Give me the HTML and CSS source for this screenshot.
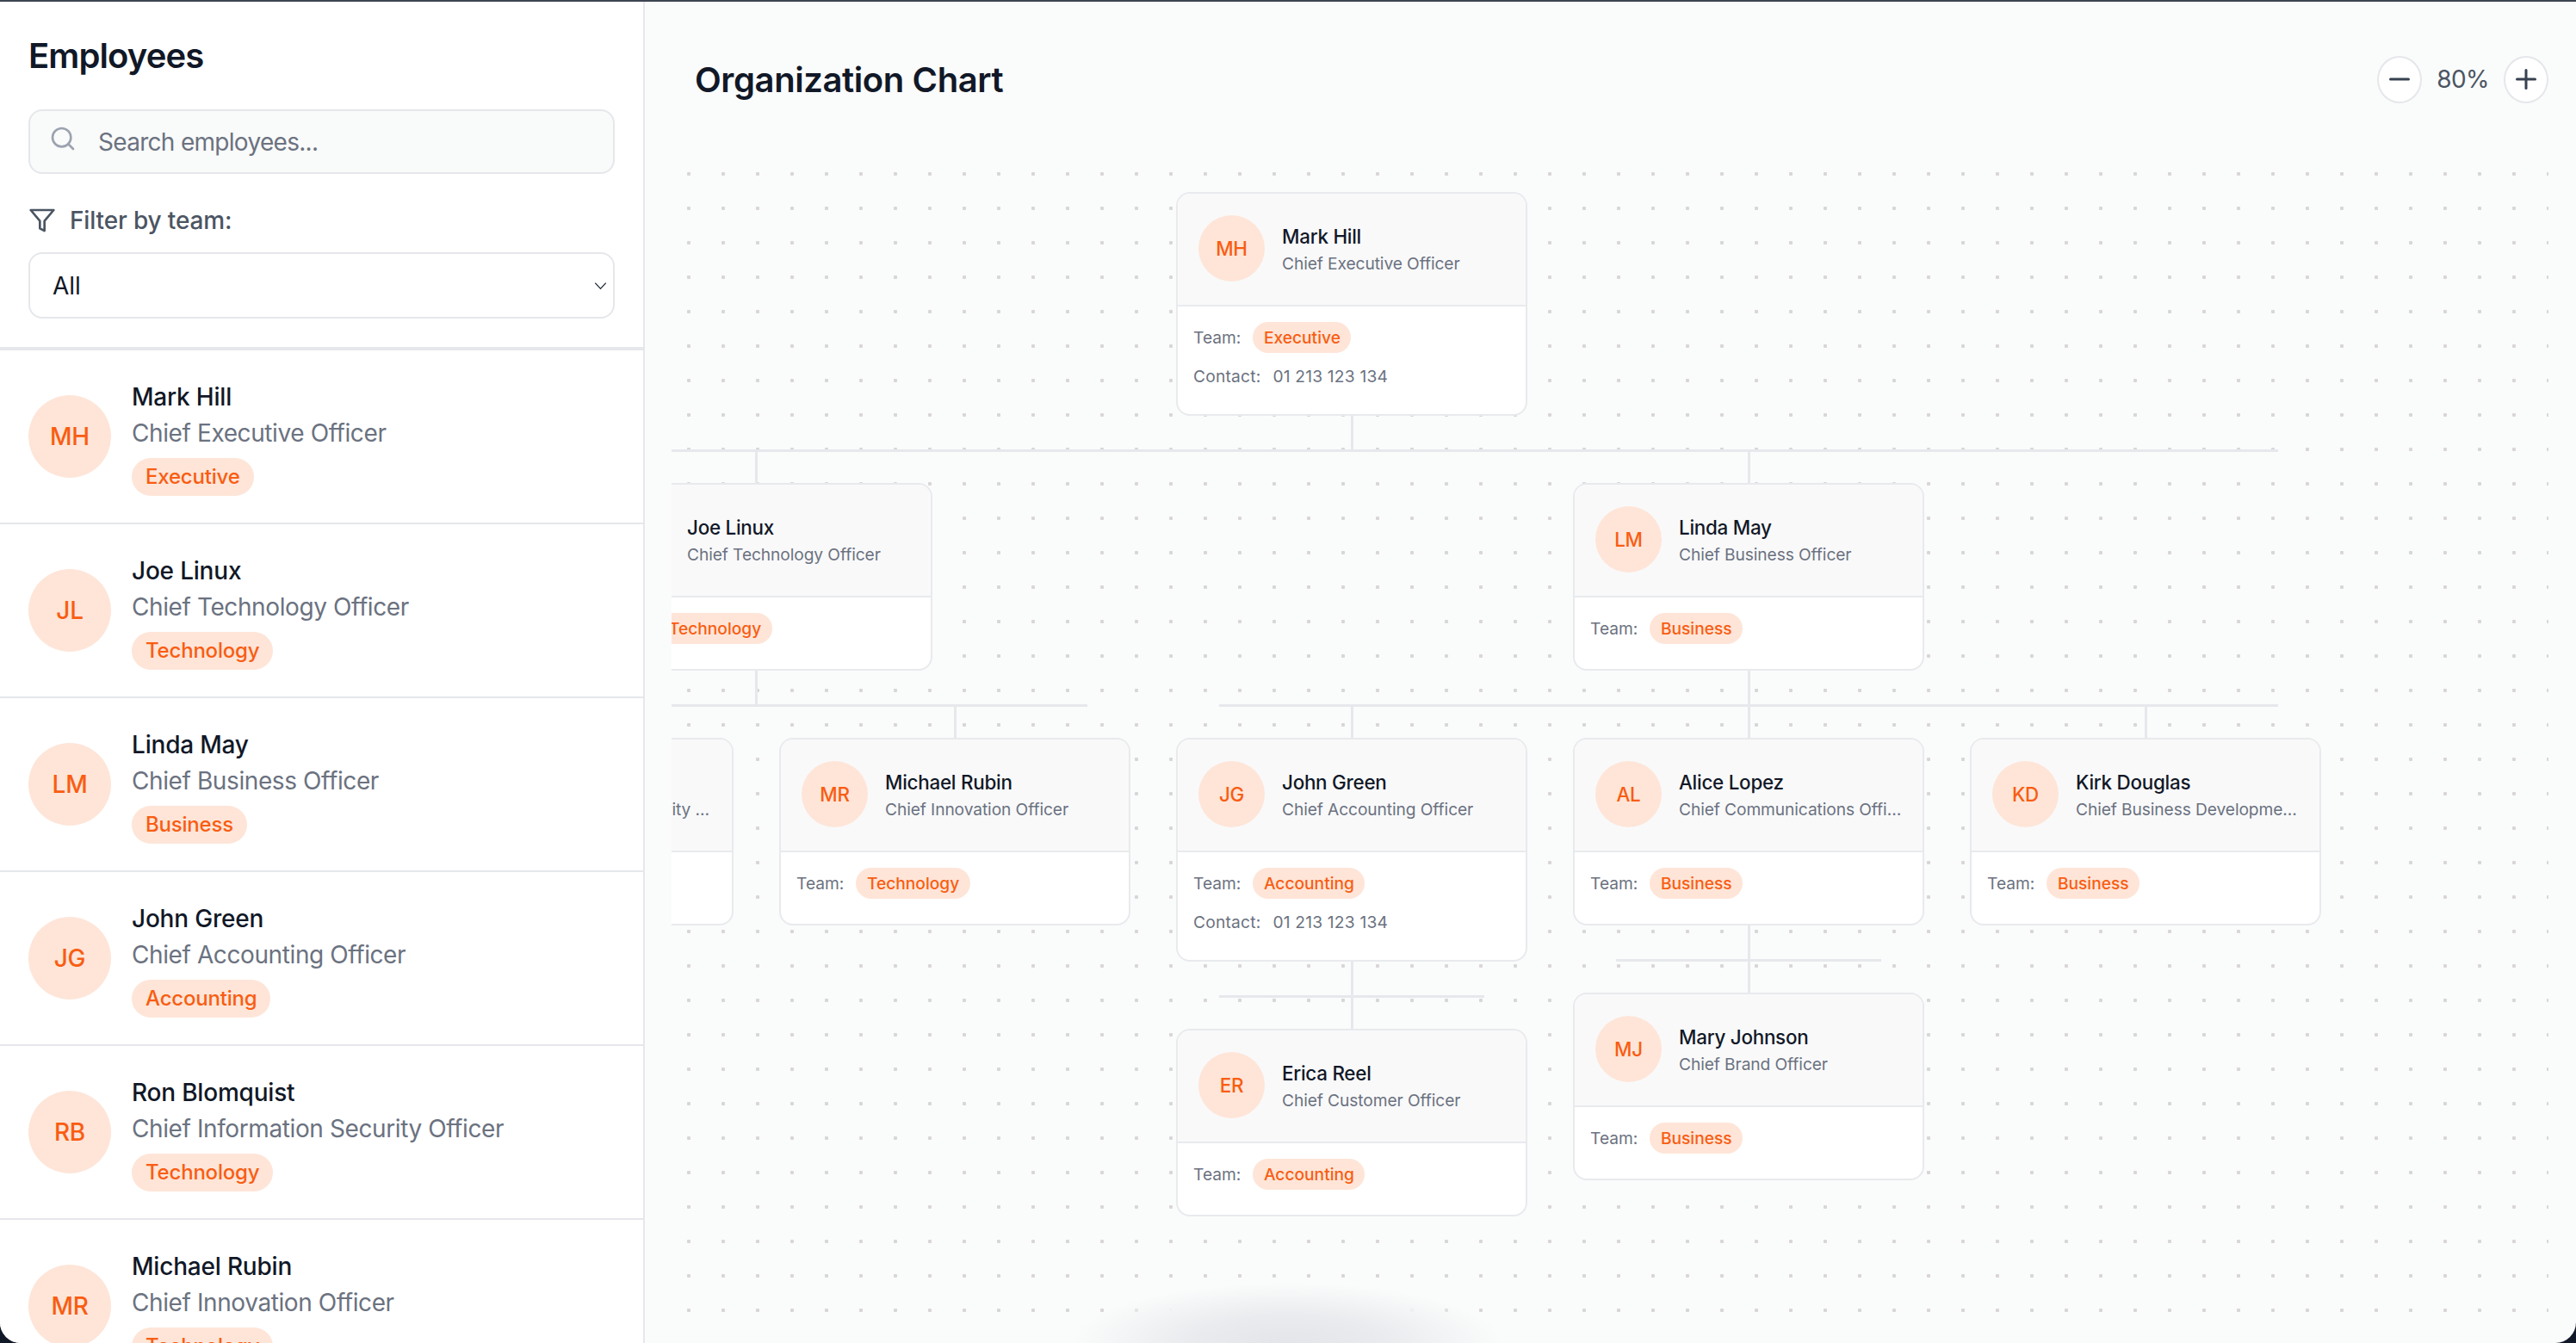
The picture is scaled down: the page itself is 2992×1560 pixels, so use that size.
FILE: index.html
```html
<!DOCTYPE html>
<html lang="en">
<head>
    <meta charset="UTF-8">
    <meta name="viewport" content="width=device-width, initial-scale=1.0">
    <title>Organization Chart</title>
    <link rel="stylesheet" href="styles.css">
</head>
<body>
<div class="app">
    <aside class="sidebar">
        <div class="sidebar-head">
            <h2 class="sidebar-title">Employees</h2>
            <div class="search">
                <svg class="search-icon" viewBox="0 0 24 24" fill="none" stroke="currentColor" stroke-width="2" stroke-linecap="round" stroke-linejoin="round"><circle cx="11" cy="11" r="8"/><path d="m21 21-4.3-4.3"/></svg>
                <input class="search-input" type="text" placeholder="Search employees...">
            </div>
            <div class="filter-label">
                <svg class="filter-icon" viewBox="0 0 24 24" fill="none" stroke="currentColor" stroke-width="2" stroke-linecap="round" stroke-linejoin="round"><polygon points="22 3 2 3 10 12.46 10 19 14 21 14 12.46 22 3"/></svg>
                <span>Filter by team:</span>
            </div>
            <div class="select-wrap">
                <select class="team-select"><option>All</option></select>
                <svg class="select-arrow" viewBox="0 0 18 12" fill="none" stroke="currentColor" stroke-width="1.6"><path d="M1.5 2 9 10l7.5-8"/></svg>
            </div>
        </div>
        <div class="employee-list">
            <div class="employee">
                <div class="avatar">MH</div>
                <div class="employee-text">
                    <div class="employee-name">Mark Hill</div>
                    <div class="employee-role">Chief Executive Officer</div>
                    <span class="tag">Executive</span>
                </div>
            </div>
            <div class="employee">
                <div class="avatar">JL</div>
                <div class="employee-text">
                    <div class="employee-name">Joe Linux</div>
                    <div class="employee-role">Chief Technology Officer</div>
                    <span class="tag">Technology</span>
                </div>
            </div>
            <div class="employee">
                <div class="avatar">LM</div>
                <div class="employee-text">
                    <div class="employee-name">Linda May</div>
                    <div class="employee-role">Chief Business Officer</div>
                    <span class="tag">Business</span>
                </div>
            </div>
            <div class="employee">
                <div class="avatar">JG</div>
                <div class="employee-text">
                    <div class="employee-name">John Green</div>
                    <div class="employee-role">Chief Accounting Officer</div>
                    <span class="tag">Accounting</span>
                </div>
            </div>
            <div class="employee">
                <div class="avatar">RB</div>
                <div class="employee-text">
                    <div class="employee-name">Ron Blomquist</div>
                    <div class="employee-role">Chief Information Security Officer</div>
                    <span class="tag">Technology</span>
                </div>
            </div>
            <div class="employee">
                <div class="avatar">MR</div>
                <div class="employee-text">
                    <div class="employee-name">Michael Rubin</div>
                    <div class="employee-role">Chief Innovation Officer</div>
                    <span class="tag">Technology</span>
                </div>
            </div>
        </div>
    </aside>

    <main class="chart">
        <div class="chart-head">
            <h1 class="chart-title">Organization Chart</h1>
            <div class="zoom">
                <button class="zoom-btn"><svg viewBox="0 0 24 24" fill="none" stroke="currentColor" stroke-width="2" stroke-linecap="round"><path d="M5 12h14"/></svg></button>
                <span class="zoom-value">80%</span>
                <button class="zoom-btn"><svg viewBox="0 0 24 24" fill="none" stroke="currentColor" stroke-width="2" stroke-linecap="round"><path d="M5 12h14"/><path d="M12 5v14"/></svg></button>
            </div>
        </div>
        <div class="canvas">
            <svg class="links" width="2180" height="1378">
                <!-- level 1 -->
                <path d="M790.5 301v40M-285 341.5H1866M98.5 341v38M1251.5 341v38"/>
                <!-- joe -> ron, michael -->
                <path d="M98.5 597v41M-285 637.5H483M329.5 638v37"/>
                <!-- linda -> john, alice, kirk -->
                <path d="M1251.5 597v78M636 637.5H1866M790.5 638v37M1712.5 638v37"/>
                <!-- john -> erica -->
                <path d="M790.5 935v78M636 975.5H944"/>
                <!-- alice -> mary -->
                <path d="M1251.5 893v78M1097 933.5H1405"/>
            </svg>

            <div class="card pos-mark">
                <div class="card-head">
                    <div class="card-avatar">MH</div>
                    <div class="card-text">
                        <div class="card-name">Mark Hill</div>
                        <div class="card-role">Chief Executive Officer</div>
                    </div>
                </div>
                <div class="card-body">
                    <div class="card-row"><span>Team:</span><span class="card-tag">Executive</span></div>
                    <div class="card-row card-contact"><span>Contact:</span><span>01 213 123 134</span></div>
                </div>
            </div>

            <div class="card pos-joe">
                <div class="card-head">
                    <div class="card-avatar">JL</div>
                    <div class="card-text">
                        <div class="card-name">Joe Linux</div>
                        <div class="card-role">Chief Technology Officer</div>
                    </div>
                </div>
                <div class="card-body">
                    <div class="card-row"><span>Team:</span><span class="card-tag">Technology</span></div>
                </div>
            </div>

            <div class="card pos-linda">
                <div class="card-head">
                    <div class="card-avatar">LM</div>
                    <div class="card-text">
                        <div class="card-name">Linda May</div>
                        <div class="card-role">Chief Business Officer</div>
                    </div>
                </div>
                <div class="card-body">
                    <div class="card-row"><span>Team:</span><span class="card-tag">Business</span></div>
                </div>
            </div>

            <div class="card pos-ron">
                <div class="card-head">
                    <div class="card-avatar">RB</div>
                    <div class="card-text">
                        <div class="card-name">Ron Blomquist</div>
                        <div class="card-role">Chief Information Security Officer</div>
                    </div>
                </div>
                <div class="card-body">
                    <div class="card-row"><span>Team:</span><span class="card-tag">Technology</span></div>
                </div>
            </div>

            <div class="card pos-michael">
                <div class="card-head">
                    <div class="card-avatar">MR</div>
                    <div class="card-text">
                        <div class="card-name">Michael Rubin</div>
                        <div class="card-role">Chief Innovation Officer</div>
                    </div>
                </div>
                <div class="card-body">
                    <div class="card-row"><span>Team:</span><span class="card-tag">Technology</span></div>
                </div>
            </div>

            <div class="card pos-john">
                <div class="card-head">
                    <div class="card-avatar">JG</div>
                    <div class="card-text">
                        <div class="card-name">John Green</div>
                        <div class="card-role">Chief Accounting Officer</div>
                    </div>
                </div>
                <div class="card-body">
                    <div class="card-row"><span>Team:</span><span class="card-tag">Accounting</span></div>
                    <div class="card-row card-contact"><span>Contact:</span><span>01 213 123 134</span></div>
                </div>
            </div>

            <div class="card pos-alice">
                <div class="card-head">
                    <div class="card-avatar">AL</div>
                    <div class="card-text">
                        <div class="card-name">Alice Lopez</div>
                        <div class="card-role">Chief Communications Officer</div>
                    </div>
                </div>
                <div class="card-body">
                    <div class="card-row"><span>Team:</span><span class="card-tag">Business</span></div>
                </div>
            </div>

            <div class="card pos-kirk">
                <div class="card-head">
                    <div class="card-avatar">KD</div>
                    <div class="card-text">
                        <div class="card-name">Kirk Douglas</div>
                        <div class="card-role">Chief Business Development Officer</div>
                    </div>
                </div>
                <div class="card-body">
                    <div class="card-row"><span>Team:</span><span class="card-tag">Business</span></div>
                </div>
            </div>

            <div class="card pos-erica">
                <div class="card-head">
                    <div class="card-avatar">ER</div>
                    <div class="card-text">
                        <div class="card-name">Erica Reel</div>
                        <div class="card-role">Chief Customer Officer</div>
                    </div>
                </div>
                <div class="card-body">
                    <div class="card-row"><span>Team:</span><span class="card-tag">Accounting</span></div>
                </div>
            </div>

            <div class="card pos-mary">
                <div class="card-head">
                    <div class="card-avatar">MJ</div>
                    <div class="card-text">
                        <div class="card-name">Mary Johnson</div>
                        <div class="card-role">Chief Brand Officer</div>
                    </div>
                </div>
                <div class="card-body">
                    <div class="card-row"><span>Team:</span><span class="card-tag">Business</span></div>
                </div>
            </div>
        </div>
    </main>
    <div class="dock-shadow"></div>
</div>
</body>
</html>
```

FILE: styles.css
```css
* {
    box-sizing: border-box;
}

body {
    margin: 0;
    height: 1560px;
    overflow: hidden;
    background-color: #111827;
    font-family: Inter, "Liberation Sans", sans-serif;
}

.app {
    position: relative;
    display: flex;
    height: 1560px;
    overflow: hidden;
    background-color: #fafbfb;
    border-top: 2px solid #3d4451;
    border-radius: 0 0 24px 24px;
}

/* sidebar */
.sidebar {
    flex: 0 0 749px;
    display: flex;
    flex-direction: column;
    overflow: hidden;
    background-color: #fff;
    border-right: 2px solid #e5e7eb;
}

.sidebar-head {
    padding: 41px 33px 33px;
    border-bottom: 4px solid #e5e7eb;
}

.sidebar-title {
    margin: 0 0 40px;
    font-size: 40px;
    line-height: 44px;
    font-weight: 600;
    letter-spacing: -0.9px;
    color: #111827;
}

.search {
    position: relative;
    margin-bottom: 33px;
}

.search-icon {
    position: absolute;
    left: 24px;
    top: 18px;
    width: 32px;
    height: 32px;
    color: #9ca3af;
}

.search-input {
    display: block;
    width: 100%;
    height: 75px;
    padding: 0 24px 0 79px;
    font-family: inherit;
    font-size: 28px;
    letter-spacing: -0.7px;
    color: #111827;
    background-color: #f9fafa;
    border: 2px solid #e5e7eb;
    border-radius: 16px;
    outline: none;
}

.search-input::placeholder {
    color: #6b7280;
    opacity: 1;
}

.filter-label {
    display: flex;
    align-items: center;
    gap: 16px;
    margin-bottom: 16px;
    font-size: 28px;
    line-height: 42px;
    font-weight: 500;
    letter-spacing: -0.15px;
    color: #4b5563;
}

.filter-icon {
    width: 32px;
    height: 32px;
}

.select-wrap {
    position: relative;
}

.team-select {
    display: block;
    width: 100%;
    height: 77px;
    padding: 0 26px;
    font-family: inherit;
    font-size: 28px;
    color: #111827;
    background-color: #fff;
    border: 2px solid #e5e7eb;
    border-radius: 16px;
    appearance: none;
    outline: none;
}

.select-arrow {
    position: absolute;
    right: 8px;
    top: 34px;
    width: 17px;
    height: 10px;
    color: #1f2937;
}

.employee {
    display: flex;
    align-items: center;
    gap: 24px;
    padding: 32px 33px;
    border-bottom: 2px solid #e5e7eb;
}

.employee-text {
    margin: 1px 0 -1px;
}

.avatar {
    flex: none;
    display: flex;
    align-items: center;
    justify-content: center;
    width: 96px;
    height: 96px;
    font-size: 28px;
    font-weight: 500;
    letter-spacing: -0.3px;
    color: #f95d12;
    background-color: #fee5d8;
    border-radius: 50%;
}

.employee-name {
    font-size: 28px;
    line-height: 42px;
    font-weight: 500;
    letter-spacing: -0.2px;
    color: #111827;
}

.employee-role {
    font-size: 28px;
    line-height: 42px;
    letter-spacing: -0.4px;
    color: #6b7280;
}

.tag {
    display: inline-block;
    margin-top: 8px;
    padding: 0 16px;
    font-size: 24px;
    line-height: 44px;
    font-weight: 500;
    letter-spacing: -0.2px;
    color: #f95d12;
    background-color: #fee5d8;
    border-radius: 22px;
}

/* chart side */
.chart {
    flex: 1;
    display: flex;
    flex-direction: column;
    padding: 0 32px 0 31px;
}

.chart-head {
    flex: 0 0 180px;
    display: flex;
    align-items: center;
    justify-content: space-between;
    padding: 0 0 0 27px;
}

.chart-title {
    margin: 0;
    font-size: 40px;
    font-weight: 600;
    letter-spacing: -0.4px;
    color: #111827;
}

.zoom {
    display: flex;
    align-items: center;
    gap: 17px;
}

.zoom-btn {
    display: flex;
    align-items: center;
    justify-content: center;
    width: 52px;
    height: 55px;
    padding: 0;
    color: #374151;
    background-color: #fff;
    border: 2px solid #e5e7eb;
    border-radius: 50%;
}

.zoom-btn svg {
    width: 36px;
    height: 36px;
}

.zoom-value {
    font-size: 28px;
    letter-spacing: -0.6px;
    color: #4b5563;
}

.canvas {
    position: relative;
    flex: 1;
    overflow: hidden;
    background-image: radial-gradient(circle, #d9d6d9 2px, transparent 2.5px);
    background-size: 40px 40px;
}

.links {
    position: absolute;
    left: 0;
    top: 0;
    fill: none;
    stroke: #e7e8ec;
    stroke-width: 3;
}

/* nodes on the canvas */
.card {
    position: absolute;
    width: 408px;
    overflow: hidden;
    background-color: #fff;
    border: 2px solid #e8eaed;
    border-radius: 16px;
}

.pos-mark { left: 586px; top: 41px; }
.pos-joe { left: -105px; top: 379px; }
.pos-linda { left: 1047px; top: 379px; }
.pos-ron { left: -336px; top: 675px; }
.pos-michael { left: 125px; top: 675px; }
.pos-john { left: 586px; top: 675px; }
.pos-alice { left: 1047px; top: 675px; }
.pos-kirk { left: 1508px; top: 675px; }
.pos-erica { left: 586px; top: 1013px; }
.pos-mary { left: 1047px; top: 971px; }

.card-head {
    display: flex;
    align-items: center;
    gap: 20px;
    padding: 25px 24px 27px;
    background-color: #f9f9fa;
    border-bottom: 2px solid #e8eaed;
}

.card-avatar {
    flex: none;
    display: flex;
    align-items: center;
    justify-content: center;
    width: 77px;
    height: 77px;
    font-size: 22.4px;
    font-weight: 500;
    letter-spacing: -0.2px;
    color: #f95d12;
    background-color: #fee5d8;
    border-radius: 50%;
}

.card-text {
    flex: 1;
    min-width: 0;
    padding-top: 1px;
}

.card-name {
    font-size: 22.4px;
    line-height: 34px;
    font-weight: 500;
    letter-spacing: -0.25px;
    color: #111827;
}

.card-role {
    overflow: hidden;
    font-size: 19.2px;
    line-height: 29px;
    letter-spacing: -0.1px;
    color: #6b7280;
    white-space: nowrap;
    text-overflow: ellipsis;
}

.card-body {
    padding: 18px 19px 29px 18px;
}

.card-row {
    display: flex;
    align-items: center;
    gap: 14px;
    font-size: 19.2px;
    color: #6b7280;
}

.card-contact {
    height: 28px;
    margin: 13px 0 1px;
    letter-spacing: 0.2px;
}

.card-tag {
    padding: 0 12.5px;
    line-height: 36px;
    font-weight: 500;
    color: #f95d12;
    background-color: #fee5d8;
    border-radius: 18px;
}

.dock-shadow {
    position: absolute;
    left: 1195px;
    bottom: 0;
    width: 600px;
    height: 80px;
    background-image: radial-gradient(ellipse 250px 70px at 50% 100%, #e4e5ea 0%, #eaebee 45%, #f3f4f5 75%, rgba(250, 251, 251, 0) 100%);
    pointer-events: none;
}
```
